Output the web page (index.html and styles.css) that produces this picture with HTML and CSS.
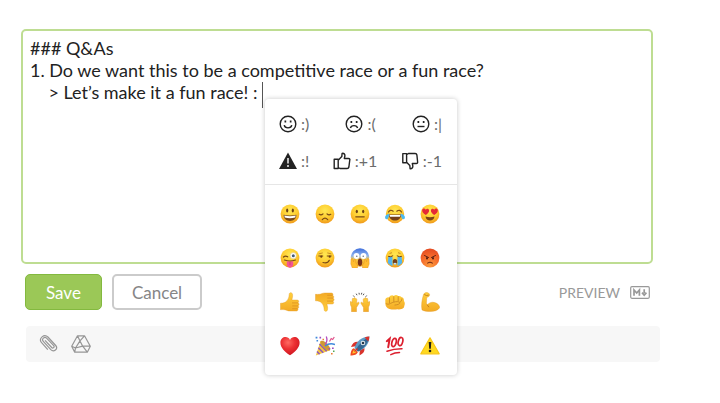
FILE: index.html
```html
<!DOCTYPE html>
<html lang="en">
<head>
<meta charset="utf-8">
<title>Comment editor</title>
<link rel="stylesheet" href="styles.css">
</head>
<body>
<svg class="defs" aria-hidden="true">
  <defs>
    <radialGradient id="face" cx=".5" cy=".32" r=".68">
      <stop offset="0" stop-color="#ffe853"/><stop offset=".6" stop-color="#fecb2f"/><stop offset="1" stop-color="#f09a1c"/>
    </radialGradient>
    <radialGradient id="angry" cx=".5" cy=".9" r=".95">
      <stop offset="0" stop-color="#fb9a3a"/><stop offset=".55" stop-color="#f4682b"/><stop offset="1" stop-color="#e2461f"/>
    </radialGradient>
    <linearGradient id="scared" x2="0" y2="1">
      <stop offset="0" stop-color="#3f6fdc"/><stop offset=".4" stop-color="#8fb4ee"/><stop offset=".62" stop-color="#f9cc45"/><stop offset="1" stop-color="#f4a524"/>
    </linearGradient>
    <linearGradient id="hand" x2="0" y2="1">
      <stop offset="0" stop-color="#ffcf3c"/><stop offset="1" stop-color="#f3aa25"/>
    </linearGradient>
    <radialGradient id="heart" cx=".4" cy=".3" r=".7">
      <stop offset="0" stop-color="#ff6a62"/><stop offset=".5" stop-color="#ec3033"/><stop offset="1" stop-color="#cf1621"/>
    </radialGradient>
  </defs>
</svg>
<main class="composer">
  <form class="form">
    <div class="editor">
      <textarea class="editor-text" aria-label="Comment" spellcheck="false">### Q&amp;As
1. Do we want this to be a competitive race or a fun race?
    &gt; Let’s make it a fun race! :</textarea>
      <span class="caret"></span>
      <div class="picker">
        <div class="shortcuts">
          <div class="shortcut-row">
            <button type="button" class="shortcut"><svg class="glyph" viewBox="0 0 18 18"><circle cx="9" cy="9" r="7.8"/><path d="M5.200 10.200c.7 3.600 6.900 3.600 7.600 0"/><path class="solid" d="M5.500 5.500h1.700v2H5.500zM10.800 5.500h1.700v2h-1.700z"/></svg><span>:)</span></button>
            <button type="button" class="shortcut"><svg class="glyph" viewBox="0 0 18 18"><circle cx="9" cy="9" r="7.8"/><path d="M5.400 13c.7-3.200 6.500-3.200 7.200 0"/><path class="solid" d="M5.500 6h1.700v2H5.500zM10.800 6h1.700v2h-1.700z"/></svg><span>:(</span></button>
            <button type="button" class="shortcut"><svg class="glyph" viewBox="0 0 18 18"><circle cx="9" cy="9" r="7.8"/><path d="M5.500 11.500h7"/><path class="solid" d="M5.500 6h1.700v2H5.500zM10.800 6h1.700v2h-1.700z"/></svg><span>:|</span></button>
          </div>
          <div class="shortcut-row">
            <button type="button" class="shortcut"><svg class="glyph" viewBox="0 0 18 18"><path class="solid" d="M9 .5 18 17H0z"/><path class="light" d="M9 6v5.500M9 13v2"/></svg><span>:!</span></button>
            <button type="button" class="shortcut"><svg class="glyph" viewBox="0 0 18 18"><path d="M1.200 7.200h4v9.300h-4zM5.200 8.200l3.600-3.600.3-3.200c1.800-.4 3 .8 2.800 2.600L11.300 6.500h4.200c1.300 0 1.700 1 1.200 2l-.8 6.500c-.2 1-.8 1.500-1.800 1.500H7l-1.800-1"/></svg><span>:+1</span></button>
            <button type="button" class="shortcut"><svg class="glyph" viewBox="0 0 18 18"><path d="M1.800 1.600h3.800v9.200H1.800zM5.600 2.600 7.400 1.500h6.800c1 0 1.500.5 1.700 1.500l.7 6.800c.2 1-.3 1.700-1.300 1.700h-4l.5 2.400c.3 1.800-.9 3-2.700 2.800l-.3-3.200-3.200-3.300"/></svg><span>:-1</span></button>
          </div>
        </div>
        <div class="emojis">
          <button type="button" class="emoji" aria-label="Smiley"><svg viewBox="0 0 20 20"><circle cx="10" cy="10" r="9.400" fill="url(#face)"/><ellipse cx="7.200" cy="6.500" rx="1.100" ry="2.100" fill="#6b3f16"/><ellipse cx="12.800" cy="6.500" rx="1.100" ry="2.100" fill="#6b3f16"/><path d="M3.600 10.800q6.400 1.600 12.800 0c0 3.900-2.700 6.200-6.400 6.200s-6.400-2.300-6.400-6.200z" fill="#7a4a1c"/><path d="M4.300 11.500q5.700 1.300 11.400 0l-.5 2.100q-5.200 1.300-10.400 0z" fill="#fff"/></svg></button>
          <button type="button" class="emoji" aria-label="Disappointed"><svg viewBox="0 0 20 20"><circle cx="10" cy="10" r="9.400" fill="url(#face)"/><g fill="none" stroke="#7a4a16" stroke-width="1.200" stroke-linecap="round"><path d="M4.200 10.300q2 1.400 3.800-.4M12 9.900q1.800 1.800 3.800.4M7.300 15.700q2.700-3 5.400 0"/></g></svg></button>
          <button type="button" class="emoji" aria-label="Neutral"><svg viewBox="0 0 20 20"><circle cx="10" cy="10" r="9.400" fill="url(#face)"/><g fill="#6b3f16"><ellipse cx="6.800" cy="7.500" rx="1.100" ry="1.700"/><ellipse cx="13.200" cy="7.500" rx="1.100" ry="1.700"/></g><path d="M5.800 12.800h8.400" stroke="#7a4a16" stroke-width="1.300" stroke-linecap="round"/></svg></button>
          <button type="button" class="emoji" aria-label="Tears of joy"><svg viewBox="0 0 20 20"><circle cx="10" cy="10" r="9.200" fill="url(#face)"/><path d="M3.500 8q1.500-3 4.700-.8M16.500 8q-1.500-3-4.700-.8" fill="none" stroke="#7a4a16" stroke-width="1.200" stroke-linecap="round"/><path d="M3.800 10.500h12.400c-.3 4-2.800 6-6.200 6s-5.900-2-6.200-6z" fill="#75401a"/><path d="M4.500 11h11l-.5 1.800H5z" fill="#fff"/><path d="M4.400 9.600C1 10.400-.6 12.500.3 14.600c1.400 1.800 3.800.4 4.100-5zM15.600 9.600c3.400.8 5 2.900 4.100 5-1.400 1.800-3.800.4-4.100-5z" fill="#4cb9ef"/></svg></button>
          <button type="button" class="emoji" aria-label="Heart eyes"><svg viewBox="0 0 20 20"><circle cx="10" cy="10" r="9.400" fill="url(#face)"/><path id="eye" d="M5.800 11C3 9.300 1.900 7.800 2.200 6.100c.5-1.800 2.600-2 3.600-.4C6.900 4.200 9 4.700 9.100 6.500 9.200 8.200 7.800 9.600 5.800 11z" fill="#e52836"/><use href="#eye" transform="matrix(-1 0 0 1 20 0)"/><path d="M5.500 12.500q4.500 1.500 9 0c-.3 5.200-8.700 5.200-9 0z" fill="#7a4317"/></svg></button>

          <button type="button" class="emoji" aria-label="Winking with tongue"><svg viewBox="0 0 20 20"><circle cx="10" cy="10" r="9.400" fill="url(#face)"/><path d="M3.500 9q2-1.800 4.200-.2M4.500 12q5.500 2.200 11 0" fill="none" stroke="#7a4a16" stroke-width="1.200" stroke-linecap="round"/><circle cx="13.300" cy="7.700" r="3.100" fill="#fff" stroke="#d5ba83" stroke-width=".5"/><circle cx="13.300" cy="7.800" r="1.500" fill="#425b78"/><path d="M6.800 13q3.200 1 6.400 0v3.500c-.4 4.200-6 4.200-6.400 0z" fill="#f45492"/><path d="M10 14v3" stroke="#c83870" stroke-width=".7"/></svg></button>
          <button type="button" class="emoji" aria-label="Smirk"><svg viewBox="0 0 20 20"><circle cx="10" cy="10" r="9.400" fill="url(#face)"/><g fill="none" stroke="#7a4a16" stroke-linecap="round"><path d="M3.800 8h4M12.200 8h4" stroke-width="1"/><path d="M8 14.500c3 .8 5.300 0 6.300-2.200" stroke-width="1.200"/><path d="M4 5.800l3.300-.8M12.700 5l3.300.8" stroke="#b87b20" stroke-width=".8"/></g><circle cx="6.300" cy="8.700" r="1.100" fill="#6b3f16"/><circle cx="14.700" cy="8.700" r="1.100" fill="#6b3f16"/></svg></button>
          <button type="button" class="emoji" aria-label="Screaming"><svg viewBox="0 0 20 20"><circle cx="10" cy="9.500" r="9.200" fill="url(#scared)"/><circle cx="6.500" cy="8" r="2.900" fill="#fff"/><circle cx="13.500" cy="8" r="2.900" fill="#fff"/><circle cx="6.800" cy="8.200" r=".7" fill="#59656e"/><circle cx="13.200" cy="8.200" r=".7" fill="#59656e"/><ellipse cx="10" cy="14.300" rx="2.200" ry="3.700" fill="#7b351b"/><path d="M1 11l1.500-.5 1 3.200.6-2.500 1.500.3.300 3.500L7.500 17v3H2.300L.8 16zM19 11l-1.500-.5-1 3.200-.6-2.500-1.500.3-.3 3.500L12.500 17v3h5.200l1.500-4z" fill="#ffbd31" stroke="#dc8b1f" stroke-width=".4"/></svg></button>
          <button type="button" class="emoji" aria-label="Crying loudly"><svg viewBox="0 0 20 20"><circle cx="10" cy="10" r="9.400" fill="url(#face)"/><path d="M3.300 9h4.200v9q-2.500-.6-4.700-3zM12.500 9h4.200l.5 6q-2.200 2.400-4.700 3z" fill="#55b5ee"/><path d="M3.500 8.500q2.300.8 4.300-.6M12.200 7.900q2 1.400 4.300.6" fill="none" stroke="#704419" stroke-width="1" stroke-linecap="round"/><path d="M4.500 5.500l2.500-.8M15.500 5.500 13 4.700" fill="none" stroke="#b87b20" stroke-width=".8"/><ellipse cx="10" cy="13.800" rx="2.200" ry="2.800" fill="#75401a"/><path d="M8.300 15.500q1.700-1.600 3.400 0-.6 1.200-1.700 1.200t-1.700-1.200z" fill="#bfe3f5"/></svg></button>
          <button type="button" class="emoji" aria-label="Angry"><svg viewBox="0 0 20 20"><circle cx="10" cy="10" r="9.400" fill="url(#angry)"/><path d="M4.500 7.500 8.600 9.500M15.500 7.500l-4.100 2M7.500 15q2.500-2 5 0" fill="none" stroke="#642313" stroke-width="1" stroke-linecap="round"/><ellipse cx="7" cy="10.200" rx="1" ry="1.200" fill="#5a2012"/><ellipse cx="13" cy="10.200" rx="1" ry="1.200" fill="#5a2012"/></svg></button>

          <button type="button" class="emoji" aria-label="Thumbs up"><svg viewBox="0 0 20 20"><path id="thumb" d="M.5 11.200c2.500.2 5.200-.8 6.500-2.500C8.500 6.800 9 5.200 9.200 2.200 9.400.2 12 .1 12.500 2.300c.4 2-.2 3.700-.6 5.700h5.300c1.800 0 2 2.300.7 2.800 1.700.5 1.500 2.700.1 3 1.200.6.900 2.500-.3 2.800.7.900.1 2.400-1.200 2.400H10c-2.500 0-3.500-1-5.500-1.300-1.500-.2-2.800-.1-4 0z" fill="url(#hand)" stroke="#e29a23" stroke-width=".4"/><path d="M12 10.900h6M12.300 13.900h5.700M12.200 16.700h5.300" stroke="#d98d1e" stroke-width=".7"/></svg></button>
          <button type="button" class="emoji" aria-label="Thumbs down"><svg viewBox="0 0 20 20"><g transform="matrix(1 0 0 -1 0 20)"><use href="#thumb"/><path d="M12 10.900h6M12.300 13.900h5.700M12.200 16.700h5.300" stroke="#d98d1e" stroke-width=".7"/></g></svg></button>
          <button type="button" class="emoji" aria-label="Raised hands"><svg viewBox="0 0 20 20"><g id="raised"><path d="M.3 9.700c.8-.5 1.300.2 1.700 1L2.300 7c.1-1 1.300-.8 1.400 0L4 6c.4-.8 1.300-.4 1.300.4l.2.500c.6-.6 1.300-.2 1.300.6l-.2 4.100 1.300-1.200c.8-.6 1.600.2 1.100 1L6.500 15.500V19.700H1.500V15C.5 13.500-.2 11 .3 9.700z" fill="url(#hand)" stroke="#dd9423" stroke-width=".4"/></g><use href="#raised" transform="matrix(-1 0 0 1 20 0)"/><path d="m3.300 3.500 1 1.300M6.200 1.700l.8 1.500M9 .8l.3 1.700M11.800.8l-.4 1.700M14 1.700l-.8 1.500M16.700 3.500l-1 1.300" stroke="#555" stroke-width="1"/></svg></button>
          <button type="button" class="emoji" aria-label="Fist"><svg viewBox="0 0 20 20"><path d="M.3 8C.5 6.200 2.300 5 4 5.400 5 3.400 7.300 2.700 8.800 3.900c1.400-1.200 3.500-1 4.300.2 1.500-.3 2.600.1 3.200 1 2 .3 2.700 2 2.700 4 .6.900.9 1.900.8 3l-.9 3.300c-1.700 1.700-4 2.200-6.600 1.900-2.600.5-5.600.4-7.800-.3C1.800 16 .6 14.500.4 12z" fill="url(#hand)"/><path d="M4.500 5.600v5.700M8.800 4.300v5.600M13.200 4.300v4.800M.8 11.500c1.700 1.200 3.200.7 4.500 0C8.500 9.700 13 9 14.500 10.200c1.300 1.300-.8 2.500-5 2.900M14.500 10.200c1.600-.3 2.500-1.800 2.300-3.700" fill="none" stroke="#c98521" stroke-width=".8"/></svg></button>
          <button type="button" class="emoji" aria-label="Flexed biceps"><svg viewBox="0 0 20 20"><path d="M3.600 2.300C4.300.5 7.500.1 8.700 1.200c1.300.8 1.100 2.500.1 3.300l-2.100 1-.3 5.700 1 1.500c2-2.200 4.500-3 7.300-2.100 3.100.8 4.800 2.700 5 5.100-1.800 2.900-5.900 3.800-9.700 3.700-3.300 0-6-.3-8-1.500-1-4.600 0-10.400 1.600-15.600z" fill="url(#hand)" stroke="#dd9423" stroke-width=".4"/><path d="M4.200 2.500q2.200 1.700 4.600.6M7.400 12.700q.2 1.700 1.800 2.400" fill="none" stroke="#bf7b1d" stroke-width=".9"/></svg></button>

          <button type="button" class="emoji" aria-label="Heart"><svg viewBox="0 0 20 20"><path d="M10 19.300C4.500 15.400.4 11.600.4 6.700c0-6 7.300-7.600 9.600-2.700 2.300-4.900 9.600-3.300 9.600 2.700 0 4.900-4.100 8.700-9.600 12.600z" fill="url(#heart)"/></svg></button>
          <button type="button" class="emoji" aria-label="Party"><svg viewBox="0 0 20 20"><path d="M5.600 5 15 14.200.8 19.600z" fill="#f4c63e"/><path d="m4.500 8 7.200 7.300M3.300 11.700l4.900 5M2 15.500l2.600 2.800" stroke="#8f57bd" stroke-width="1.500"/><ellipse cx="10.300" cy="9.600" rx="2.600" ry="6.500" transform="rotate(-45 10.300 9.600)" fill="#cf9a35"/><path d="M10 10q4.500-3.500 10-1.500" fill="none" stroke="#3e88dc" stroke-width="1.500"/><path d="M10 8.500Q13 5 11.300.5" fill="none" stroke="#b44bbd" stroke-width="1.300"/><path d="m14.500 5.500 1.700-3 1.500 1 1.600-2.500" fill="none" stroke="#e0528b" stroke-width="1.200"/><path d="M.6.800h1.800v1.700H.6zM1.500 4h1.600v1.500H1.500z" fill="#3e88dc"/><path d="M4.500.8h1.600v1.600H4.500zM13.500 12h1.700v1.500h-1.700zM17 11.500h1.700V13H17z" fill="#9d4dc0"/><path d="M7.500 2.800h1.500v1.500H7.500zM16 17h1.600v1.600H16z" fill="#ef7d34"/><path d="M18 14.600h1.500V16H18z" fill="#52a955"/></svg></button>
          <button type="button" class="emoji" aria-label="Rocket"><svg viewBox="0 0 20 20"><path d="M8.300 5.800C4.600 5.400 2.500 7.200 1 11l5-.8zM14.400 12c.5 3.600-1.300 5.800-5 7.500l.4-5.300z" fill="#d9332c"/><path d="M4 12.200c-2.500.5-3.300 3.500-3.600 7.300 3.700-.3 6.800-1.100 7.500-3.600z" fill="#f04b20"/><path d="M4.500 13.800c-1.500.7-1.800 2.200-2.100 3.900 1.800-.3 3.400-.7 3.900-2.100z" fill="#ffc72f"/><path d="M4.500 12C6.500 5.500 11.500.8 19.400.6c.1 7.600-5 12.900-11.400 15z" fill="#5f9ac4"/><path d="M6 13.500C9 8 13.500 3.500 19 1c-1 6.800-5.500 11.800-11 14.600z" fill="#356792"/><path d="M14.700 1.600q2.200-.9 4.700-1-.1 2.500-1 4.800z" fill="#d9332c"/><circle cx="13" cy="7" r="2.300" fill="#e6eef2"/><circle cx="13" cy="7" r="1.300" fill="#26384b"/><path d="m7.500 12.500-3 3" stroke="#d9332c" stroke-width="1.500"/></svg></button>
          <button type="button" class="emoji" aria-label="One hundred"><svg viewBox="0 0 20 20"><g fill="none" stroke="#dc1f2e" stroke-linecap="round"><path d="M1.800 5.200 4.700 2.700 3.200 11.200" stroke-width="2"/><ellipse cx="9" cy="6.500" rx="2.100" ry="4.200" transform="rotate(14 9 6.500)" stroke-width="1.700"/><ellipse cx="15.500" cy="5.600" rx="2.200" ry="4.200" transform="rotate(14 15.500 5.600)" stroke-width="1.700"/><path d="M2 15.200Q9 12.600 17 12.700M5.800 18.600q3.900-2 8.700-2.100" stroke-width="1.500"/></g></svg></button>
          <button type="button" class="emoji" aria-label="Warning"><svg viewBox="0 0 20 20"><path d="M10 1.800 19.200 17.800H.8z" fill="#ffd91f" stroke="#f8c616" stroke-width="1.200" stroke-linejoin="round"/><path d="M8.700 6h2.600l-.5 6.700H9.200z" fill="#252019"/><circle cx="10" cy="15" r="1.300" fill="#252019"/></svg></button>
        </div>
      </div>
    </div>
    <div class="actions">
      <button type="button" class="btn btn-primary">Save</button>
      <button type="button" class="btn">Cancel</button>
      <a class="preview" href="#">PREVIEW</a>
      <a class="markdown" href="#" aria-label="Markdown help"><svg viewBox="0 0 20 13"><rect x=".7" y=".7" width="18.600" height="11.600" rx="1.200"/><path d="M4 9.700V4l2.700 3L9.400 4v5.700" stroke-width="1.700"/><path d="M14.200 3.300v4M12 6.600l2.200 2.600 2.200-2.600" stroke-width="1.700"/></svg></a>
    </div>
    <div class="attachments">
      <button type="button" class="attach" aria-label="Attach a file"><svg viewBox="0 0 20 20"><path d="m6 6.300 6.700 7.200c1.200 1.300 3.200-.4 2-1.800L7.800 4.300C5.500 2 2.200 5 4.300 7.400l7.500 8.300c3 3.100 7.700-.9 4.900-4.200L8.900 3C5.200-.7-.9 4.500 2.600 8.700l6.200 6.900"/></svg></button>
      <button type="button" class="attach" aria-label="Attach from drive"><svg viewBox="0 0 20 20"><path d="M6.500 1.800h7l5.800 10.400-3 6H3.700l-3-6zM6.500 1.800 9 6.900 4.500 14l-.8 4.200M13.500 1.800 9 6.900M9 6.900l2.700 5.300h7.600M4.500 14l7.200-1.800M.7 12.200 4.500 14M11.700 12.200l4.600 6"/></svg></button>
    </div>
  </form>
</main>
</body>
</html>
```
FILE: styles.css
```css
* {
  box-sizing: border-box;
}

body {
  margin: 0;
  background: #fff;
  color: #222;
  font-family: Lato, "Liberation Sans", sans-serif;
}

button {
  padding: 0;
  border: 0;
  background: none;
  color: inherit;
  font: inherit;
  cursor: pointer;
}

.defs {
  position: absolute;
  width: 0;
  height: 0;
}

.composer {
  padding: 29px 60px 24px 21px;
}

.editor {
  position: relative;
  margin-right: 7px;
}

.editor-text {
  display: block;
  width: 100%;
  height: 235px;
  padding: 6px 7px;
  border: 2px solid #bedd92;
  border-radius: 5px;
  outline: 0;
  resize: none;
  background: #fff;
  color: #222;
  font: 18px/22px Lato, "Liberation Sans", sans-serif;
}

.caret {
  position: absolute;
  top: 53px;
  left: 241px;
  width: 1px;
  height: 26px;
  background: #555;
}

.picker {
  position: absolute;
  z-index: 1;
  top: 70px;
  left: 244px;
  width: 192px;
  border-radius: 4px;
  background: #fff;
  box-shadow: 0 0 5px rgba(0, 0, 0, .22);
}

.shortcuts {
  padding: 6px 15px 5px 14px;
  border-bottom: 1px solid #e6e6e6;
}

.shortcut-row {
  display: flex;
  justify-content: space-between;
}

.shortcut {
  display: flex;
  align-items: center;
  gap: 4px;
  height: 37px;
  color: #6c6c6c;
  font-size: 16px;
}

.glyph {
  width: 18px;
  height: 18px;
  fill: none;
  stroke: #222;
  stroke-width: 1.400;
  stroke-linejoin: round;
}

.glyph .solid {
  fill: #222;
  stroke: none;
}

.glyph .light {
  stroke: #fff;
}

.emojis {
  display: grid;
  grid-template-columns: repeat(5, 1fr);
  padding: 7px 9px 7px 7px;
}

.emoji {
  display: grid;
  place-items: center;
  height: 44px;
}

.emoji svg {
  width: 20px;
  height: 20px;
}

.actions {
  display: flex;
  align-items: center;
  gap: 10px;
  margin: 10px 10px 0 4px;
}

.btn {
  height: 36px;
  padding: 0 18px;
  border: 2px solid #cbcbcb;
  border-radius: 5px;
  color: #868686;
  font-size: 17px;
}

.btn-primary {
  padding: 0 20px;
  border: 1px solid #83b93f;
  background: #9bc857;
  color: #fff;
}

.preview {
  margin-left: auto;
  color: #999;
  font-size: 14px;
  text-decoration: none;
}

.markdown {
  display: flex;
}

.markdown svg {
  width: 20px;
  height: 13px;
  fill: none;
  stroke: #999;
  stroke-width: 1.200;
}

.attachments {
  display: flex;
  align-items: center;
  gap: 12px;
  height: 36px;
  margin: 16px 0 0 5px;
  padding: 0 13px;
  border-radius: 4px;
  background: #f7f7f7;
}

.attach {
  display: flex;
}

.attach svg {
  width: 20px;
  height: 20px;
  fill: none;
  stroke: #969696;
  stroke-width: 1.200;
  stroke-linejoin: round;
}
```
